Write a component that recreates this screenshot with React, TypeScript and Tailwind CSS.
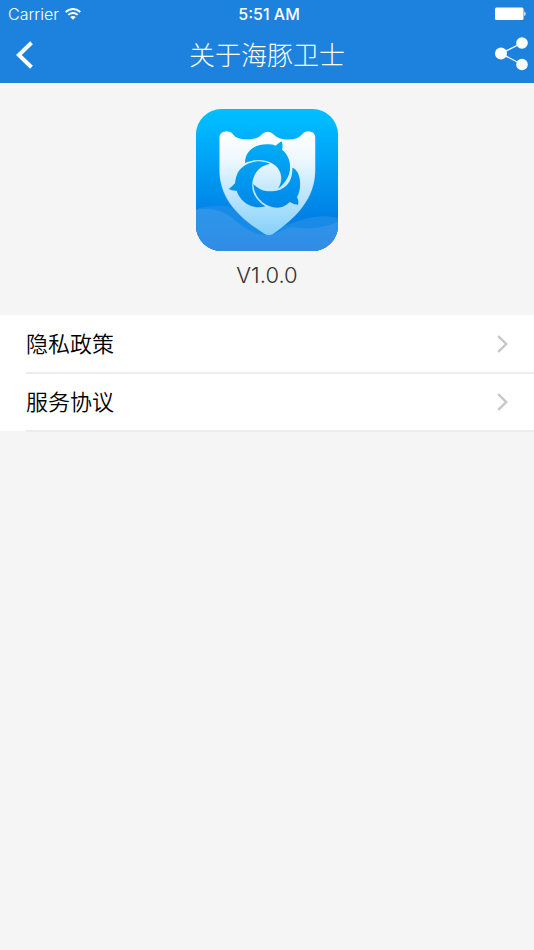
import React from 'react';

const links = [
  { id: 'privacy', label: '隐私政策' },
  { id: 'terms', label: '服务协议' },
];

function StatusBar() {
  return (
    <div className="grid h-7 grid-cols-3 items-center pl-2 pr-2 text-[16px] leading-5">
      <div className="flex items-center gap-[6px]">
        <span className="font-light">Carrier</span>
        <svg width="16" height="12" viewBox="0 0 16 12" fill="none" stroke="currentColor" strokeWidth="1.9" aria-hidden="true">
          <path d="M0.7 4C4.8 -0.1 11.2 -0.1 15.3 4" />
          <path d="M3.3 6.9C6 4.4 10 4.4 12.7 6.9" />
          <path d="M8 11.8L5.2 9C6.7 7.6 9.3 7.6 10.8 9Z" fill="currentColor" stroke="none" />
        </svg>
      </div>
      <span className="pl-1 text-center font-medium">5:51 AM</span>
      <svg className="justify-self-end" width="32" height="14" viewBox="0 0 32 14" fill="currentColor" aria-hidden="true">
        <rect x="1" y="0.5" width="28.5" height="12.5" rx="1.5" />
        <path d="M30.3 4.5C32 5 32 8.5 30.3 9Z" />
      </svg>
    </div>
  );
}

function AppLogo() {
  return (
    <svg width="142" height="142" viewBox="18 25 426 426" role="img" aria-label="海豚卫士">
      <defs>
        <linearGradient id="tile" x1="0" y1="0" x2="0" y2="1">
          <stop offset="0" stopColor="#00bfff" />
          <stop offset="0.1" stopColor="#00b9ff" />
          <stop offset="0.75" stopColor="#0081e6" />
          <stop offset="1" stopColor="#0078e2" />
        </linearGradient>
        <linearGradient id="shield" x1="0" y1="0" x2="0" y2="1">
          <stop offset="0" stopColor="#ffffff" />
          <stop offset="0.25" stopColor="#f0f9ff" />
          <stop offset="1" stopColor="#85d0fb" />
        </linearGradient>
        <linearGradient id="dolphin" gradientUnits="userSpaceOnUse" x1="0" y1="122" x2="0" y2="322">
          <stop offset="0" stopColor="#00adf7" />
          <stop offset="1" stopColor="#0088e9" />
        </linearGradient>
        <linearGradient id="wave" x1="0" y1="0" x2="0" y2="1">
          <stop offset="0" stopColor="#2b97ea" />
          <stop offset="1" stopColor="#338be6" />
        </linearGradient>
        <clipPath id="corners">
          <rect x="18" y="25" width="426" height="426" rx="76" />
        </clipPath>
      </defs>
      <g clipPath="url(#corners)">
        <rect x="18" y="25" width="426" height="426" fill="url(#tile)" />
        <path d="M18 326C85 304 127 317 180 344C225 367 255 382 300 370C350 348 400 340 444 352V451H18Z" fill="#188ae8" />
        <path d="M18 327C66 319 104 331 137 360C168 389 205 407 240 402C270 398 286 380 308 380C355 388 400 382 444 364V451H18Z" fill="url(#wave)" />
      </g>
      <path
        d="M88 112C87 90 117 87 128 99C137 112 150 115 170 116C193 116 205 111 214 102C225 90 241 90 252 102C262 112 279 117 300 116C321 115 330 108 338 99C349 87 377 90 376 112V207C376 294 320 350 248 401Q236 407 225 401C145 350 88 294 88 207Z"
        fill="url(#shield)"
        stroke="#007bd0"
        strokeOpacity="0.15"
        strokeWidth="3"
      />
      <g fill="url(#dolphin)">
        <path d="M165 187C165 150 196 129 235 131Q249 131 257 135Q265 127 275 122Q280 133 276 147C302 165 319 223 264 264C273 250 277 234 271 216C261 187 222 166 165 187Z" />
        <path d="M241 190C208 173 161 184 143 217Q136 232 135 248Q125 259 116 265Q127 271 140 270C151 305 187 328 226 317C199 301 178 270 190 233C198 208 215 194 241 190Z" />
        <path d="M190 250C192 289 222 319 262 321Q283 321 299 304Q312 312 324 312Q327 301 321 289C337 264 333 209 307 201C309 244 286 270 247 272C221 273 205 265 190 250Z" />
      </g>
    </svg>
  );
}

export default function App() {
  return (
    <div className="min-h-screen bg-[#f5f5f5] font-['Inter','Noto_Sans_CJK_SC',sans-serif] text-black">
      <header className="bg-[#1d82de] text-white">
        <StatusBar />
        <div className="grid h-[55px] grid-cols-[1fr_auto_1fr] items-center">
          <button type="button" aria-label="返回" className="justify-self-start pb-[2px] pl-4">
            <svg width="18" height="28" viewBox="0 0 18 28" fill="none" stroke="currentColor" strokeWidth="4" aria-hidden="true">
              <path d="M15.5 1.8L2.8 14L15.5 26.2" />
            </svg>
          </button>
          <h1 className="text-[26px] font-light leading-9">关于海豚卫士</h1>
          <button type="button" aria-label="分享" className="justify-self-end pb-[2px] pr-[6px]">
            <svg width="33" height="35" viewBox="0 0 33 35" fill="currentColor" aria-hidden="true">
              <path d="M27 6L6 16.5L27 27.5" fill="none" stroke="currentColor" strokeWidth="1.2" />
              <circle cx="6" cy="16.5" r="6" />
              <circle cx="27" cy="6" r="5.8" />
              <circle cx="27" cy="27.5" r="5.8" />
            </svg>
          </button>
        </div>
      </header>

      <main>
        <section className="flex flex-col items-center gap-2 pb-6 pt-[26px]">
          <AppLogo />
          <p className="pt-px text-[22px] font-[350] leading-[31px] text-[#333333]">V1.0.0</p>
        </section>

        <nav className="bg-white">
          {links.map((link) => (
            <a key={link.id} href={`#${link.id}`} className="flex h-[58px] pl-[26px]">
              <span className="-mb-px flex flex-1 items-center justify-between border-b-2 border-[#ececec] pr-[26px] pt-px text-[22px] font-[350] leading-8">
                {link.label}
                <svg width="11" height="18" viewBox="0 0 11 18" fill="none" stroke="#c7c7cc" strokeWidth="2.4" aria-hidden="true">
                  <path d="M1.2 1.2L9.2 9L1.2 16.8" />
                </svg>
              </span>
            </a>
          ))}
        </nav>
      </main>
    </div>
  );
}
